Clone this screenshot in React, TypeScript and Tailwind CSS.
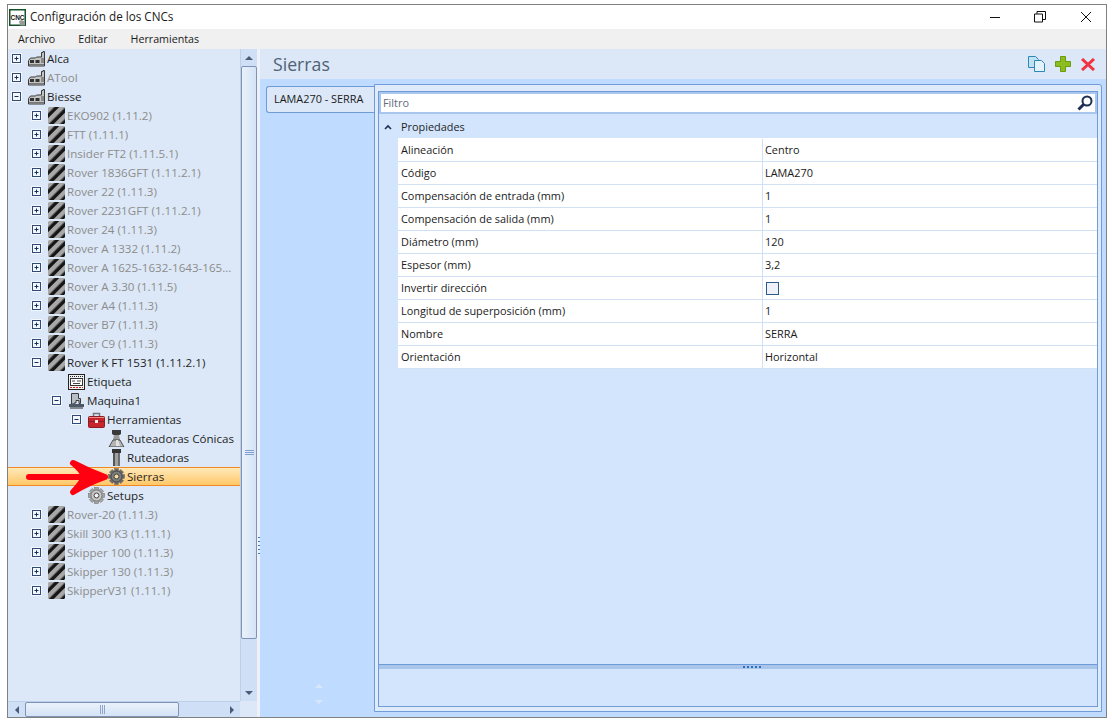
const font = "font-['Open_Sans','Noto_Sans',sans-serif]";

function Expander({ open }: { open: boolean }) {
  return (
    <svg width="11" height="11" viewBox="0 0 11 11" className="shrink-0">
      <rect x="0" y="0" width="11" height="11" fill="#f4f7fc" />
      <rect x="1.500" y="1.500" width="8" height="8" fill="#f4f7fc" stroke="#2e4a78" />
      <path d="M3.500 5.500h4" stroke="#16305c" />
      {!open && <path d="M5.500 3.500v4" stroke="#16305c" />}
    </svg>
  );
}

function Factory() {
  return (
    <svg width="17" height="16" viewBox="0 0 17 16">
      <path d="M0.500 15V9.500l2-2.500h5l1-1h5V1.500h1.500V0.500h1.500V15z" fill="#c4c4c4" stroke="#3a3a3a" />
      <path d="M2 9h4v3H2zM7.500 9h4v3h-4z" fill="#333" />
      <path d="M1 13.500h15" stroke="#777" />
      <path d="M13 7h3v5h-3z" fill="#8a8a8a" />
    </svg>
  );
}

function Hatch({ id }: { id: string }) {
  return (
    <svg width="17" height="17" viewBox="0 0 17 17">
      <defs>
        <pattern id={id} width="8" height="8" patternUnits="userSpaceOnUse" patternTransform="rotate(-45)">
          <rect width="8" height="8" fill="#161616" />
          <rect width="8" height="4.500" fill="#a8a8a8" />
        </pattern>
      </defs>
      <path d="M1 0h15l1 1v15l-1 1H1l-1-1V1z" fill={`url(#${id})`} />
    </svg>
  );
}

function Label() {
  return (
    <svg width="17" height="16" viewBox="0 0 17 16">
      <rect x="0.500" y="0.500" width="16" height="15" fill="#f2f2f2" stroke="#222" />
      <path d="M2 2.500h13" stroke="#222" strokeDasharray="1 1" />
      <rect x="2.500" y="4.500" width="12" height="7" fill="#fff" stroke="#333" />
      <path d="M4 7h3M9 7h4M5 9.500h7" stroke="#444" />
      <path d="M2 13.500h13" stroke="#d02020" strokeDasharray="2 1" />
    </svg>
  );
}

function Machine() {
  return (
    <svg width="17" height="16" viewBox="0 0 17 16">
      <path d="M3.500 0.500h7v5h2v5h-1.500V7.500H8V10H6v1H3.500z" fill="#b8bec6" stroke="#3c3c3c" />
      <path d="M1 11h15v3H1z" fill="#4d5866" />
      <path d="M2 15h13" stroke="#2a2a2a" />
    </svg>
  );
}

function Toolbox() {
  return (
    <svg width="17" height="16" viewBox="0 0 17 16">
      <path d="M5.500 5V1.500h6V5" fill="none" stroke="#777" strokeWidth="1.500" />
      <rect x="0.500" y="4.500" width="16" height="11" rx="1" fill="#c8242c" stroke="#8c1d22" />
      <path d="M1 5.500h15" stroke="#ef8a8a" />
      <path d="M1 9.500h15" stroke="#8c1d22" />
      <rect x="7" y="8" width="3" height="3" fill="#ececec" />
    </svg>
  );
}

function Conical() {
  return (
    <svg width="17" height="17" viewBox="0 0 17 17">
      <path d="M4 0h9v4l-1.500 1h-6L4 4z" fill="#3a3a3a" />
      <path d="M6 5h5l1 5H5z" fill="#9a9a9a" />
      <path d="M5 10h7l4 7H1z" fill="#b4b4b4" stroke="#333" strokeWidth="0.800" />
      <path d="M8 10h2l2 6H8z" fill="#e2e2e2" />
    </svg>
  );
}

function Router() {
  return (
    <svg width="17" height="17" viewBox="0 0 17 17">
      <rect x="4" y="0" width="9" height="4" fill="#333" />
      <rect x="5" y="4" width="7" height="13" fill="#a0a0a0" />
      <rect x="5" y="4" width="2" height="13" fill="#555" />
      <rect x="10" y="4" width="2" height="13" fill="#6e6e6e" />
    </svg>
  );
}

function Gear({ dark }: { dark?: boolean }) {
  const teeth = [0, 45, 90, 135, 180, 225, 270, 315];
  return (
    <svg width="17" height="17" viewBox="0 0 17 17">
      {teeth.map((a) => (
        <rect
          key={a}
          x="6.500"
          y="0.500"
          width="4"
          height="4"
          fill={dark ? "#6a6a6a" : "#a4a4a4"}
          stroke="#666"
          strokeWidth="0.500"
          transform={`rotate(${a} 8.500 8.500)`}
        />
      ))}
      <circle cx="8.500" cy="8.500" r="5.500" fill={dark ? "#7d7d7d" : "#c9c9c9"} stroke={dark ? "#444" : "#777"} />
      <circle cx="8.500" cy="8.500" r="2.500" fill={dark ? "#f0d9a0" : "#f1f1f1"} stroke="#444" />
    </svg>
  );
}

type Row = { label: string; level: number; icon: React.ReactNode; open?: boolean; leaf?: boolean; dim?: boolean; selected?: boolean };

const machines = [
  "EKO902 (1.11.2)",
  "FTT (1.11.1)",
  "Insider FT2 (1.11.5.1)",
  "Rover 1836GFT (1.11.2.1)",
  "Rover 22 (1.11.3)",
  "Rover 2231GFT (1.11.2.1)",
  "Rover 24 (1.11.3)",
  "Rover A 1332 (1.11.2)",
  "Rover A 1625-1632-1643-165...",
  "Rover A 3.30 (1.11.5)",
  "Rover A4 (1.11.3)",
  "Rover B7 (1.11.3)",
  "Rover C9 (1.11.3)",
];

const machinesAfter = ["Rover-20 (1.11.3)", "Skill 300 K3 (1.11.1)", "Skipper 100 (1.11.3)", "Skipper 130 (1.11.3)", "SkipperV31 (1.11.1)"];

const rows: Row[] = [
  { label: "Alca", level: 0, icon: <Factory /> },
  { label: "ATool", level: 0, icon: <Factory />, dim: true },
  { label: "Biesse", level: 0, icon: <Factory />, open: true },
  ...machines.map((m, i) => ({ label: m, level: 1, icon: <Hatch id={`h${i}`} />, dim: true })),
  { label: "Rover K FT 1531 (1.11.2.1)", level: 1, icon: <Hatch id="hk" />, open: true },
  { label: "Etiqueta", level: 2, icon: <Label />, leaf: true },
  { label: "Maquina1", level: 2, icon: <Machine />, open: true },
  { label: "Herramientas", level: 3, icon: <Toolbox />, open: true },
  { label: "Ruteadoras Cónicas", level: 4, icon: <Conical />, leaf: true },
  { label: "Ruteadoras", level: 4, icon: <Router />, leaf: true },
  { label: "Sierras", level: 4, icon: <Gear dark />, leaf: true, selected: true },
  { label: "Setups", level: 3, icon: <Gear />, leaf: true },
  ...machinesAfter.map((m, i) => ({ label: m, level: 1, icon: <Hatch id={`a${i}`} />, dim: true })),
];

const indents = ["pl-[3px]", "pl-[23px]", "pl-[43px]", "pl-[63px]", "pl-[83px]"];

function TreeRow({ row }: { row: Row }) {
  return (
    <div
      className={`flex h-[19px] items-center text-[11.6px] ${indents[row.level]} ${row.dim ? "text-[#8c8c8c]" : "text-[#1f1f1f]"} ${row.selected ? "border-y border-[#f08a24] bg-gradient-to-b from-[#ffe9b8] to-[#ffc765]" : ""}`}
    >
      <div className="w-[11px] shrink-0">{!row.leaf && <Expander open={!!row.open} />}</div>
      <div className="ml-[6px] flex w-[17px] shrink-0 items-center justify-center">{row.icon}</div>
      <span className="ml-[2px] whitespace-nowrap">{row.label}</span>
    </div>
  );
}

const props: [string, string][] = [
  ["Alineación", "Centro"],
  ["Código", "LAMA270"],
  ["Compensación de entrada (mm)", "1"],
  ["Compensación de salida (mm)", "1"],
  ["Diámetro (mm)", "120"],
  ["Espesor (mm)", "3,2"],
  ["Invertir dirección", ""],
  ["Longitud de superposición (mm)", "1"],
  ["Nombre", "SERRA"],
  ["Orientación", "Horizontal"],
];

export default function App() {
  return (
    <div className={`h-[728px] w-[1112px] bg-white pl-[7px] pt-[4px] ${font}`}>
      <div className="relative flex h-[714px] w-[1100px] flex-col border border-[#808080] bg-white">
        {/* title bar */}
        <div className="flex h-[24px] shrink-0 items-center pl-[1px]">
          <svg width="17" height="17" viewBox="0 0 17 17" className="shrink-0">
            <rect x="0.750" y="0.750" width="15.500" height="15.500" fill="#fff" stroke="#14532a" strokeWidth="1.500" />
            <path d="M10 12l3-1 3 2v3.500h-5z" fill="#9a9a9a" />
            <text x="8.500" y="11" textAnchor="middle" fontSize="6.500" fontWeight="700" fill="#111" fontFamily="Liberation Sans">
              CNC
            </text>
          </svg>
          <span className="ml-[4px] text-[11.7px] text-[#1a1a1a]">Configuración de los CNCs</span>
          <div className="ml-auto flex items-center pr-[14px]">
            <svg width="12" height="12" viewBox="0 0 12 12" className="mr-[33px]">
              <path d="M1 6.500h10" stroke="#111" />
            </svg>
            <svg width="12" height="12" viewBox="0 0 12 12" className="mr-[34px]">
              <path d="M0.500 3h8v8h-8zM3 3V0.500h8.500v8H9" fill="none" stroke="#111" />
            </svg>
            <svg width="12" height="12" viewBox="0 0 12 12">
              <path d="M1 1l10 10M11 1L1 11" stroke="#111" />
            </svg>
          </div>
        </div>
        {/* menu */}
        <div className="flex h-[20px] shrink-0 items-center gap-[23px] bg-[#f0f0f0] pl-[10px] text-[10.7px] text-[#1a1a1a]">
          <span>Archivo</span>
          <span>Editar</span>
          <span>Herramientas</span>
        </div>
        <div className="flex min-h-0 flex-1">
          {/* left: tree */}
          <div className="flex w-[249px] shrink-0 flex-col">
            <div className="flex min-h-0 flex-1">
              <div className="relative w-[232px] overflow-hidden bg-[#dce8f7]">
                {rows.map((r) => (
                  <TreeRow key={r.label} row={r} />
                ))}
                <svg width="86" height="40" viewBox="0 0 86 40" className="absolute left-[18px] top-[408px]">
                  <path d="M3 20H76" fill="none" stroke="#ff0010" strokeWidth="6" strokeLinecap="round" />
                  <path
                    d="M47 6Q62 14 79 20Q62 26 47 35Q56 26 58 20Q56 13 47 6z"
                    fill="#ff0010"
                    stroke="#ff0010"
                    strokeWidth="6"
                    strokeLinejoin="round"
                  />
                </svg>
              </div>
              <div className="flex w-[17px] flex-col border-l border-[#bcd0ea] bg-[#cfdff5]">
                <div className="flex h-[17px] shrink-0 items-center justify-center">
                  <div className="h-0 w-0 border-x-[4px] border-b-[4px] border-x-transparent border-b-[#4a5a78]" />
                </div>
                <div className="flex h-[573px] shrink-0 justify-center rounded-[2px] border border-[#7f93b5] bg-gradient-to-r from-[#eaf1fb] to-[#d5e3f6] pt-[383px]">
                  <div className="h-[5px] w-[9px] border-y border-[#7f9fcc] after:mt-[1px] after:block after:h-px after:bg-[#7f9fcc]" />
                </div>
                <div className="flex-1" />
                <div className="flex h-[17px] shrink-0 items-center justify-center">
                  <div className="h-0 w-0 border-x-[4px] border-t-[4px] border-x-transparent border-t-[#4a5a78]" />
                </div>
              </div>
            </div>
            <div className="flex h-[16px] shrink-0">
              <div className="flex w-[232px] items-center border-t border-[#bcd0ea] bg-[#cfdff5]">
                <div className="flex w-[17px] shrink-0 items-center justify-center">
                  <div className="h-0 w-0 border-y-[4px] border-r-[4px] border-y-transparent border-r-[#4a5a78]" />
                </div>
                <div className="flex h-full w-[154px] shrink-0 items-center justify-center rounded-[2px] border border-[#7f93b5] bg-gradient-to-b from-[#eaf1fb] to-[#d5e3f6]">
                  <div className="h-[9px] w-[5px] border-x border-[#8fa6c8] after:ml-[1px] after:block after:h-full after:w-px after:bg-[#8fa6c8]" />
                </div>
                <div className="flex-1" />
                <div className="flex w-[16px] shrink-0 items-center justify-center">
                  <div className="h-0 w-0 border-y-[4px] border-l-[4px] border-y-transparent border-l-[#4a5a78]" />
                </div>
              </div>
              <div className="w-[17px] bg-[#dce8f7]" />
            </div>
          </div>
          {/* splitter */}
          <div className="w-[3px] shrink-0 bg-[#eef2f8] pl-[1px] pt-[488px]">
            <div className="h-[18px] w-[2px] bg-[repeating-linear-gradient(to_bottom,#3f78c8_0,#3f78c8_1.500px,transparent_1.500px,transparent_4px)]" />
          </div>
          {/* right */}
          <div className="flex min-w-0 flex-1 flex-col bg-[#bfdbff]">
            <div className="flex h-[30px] shrink-0 items-center bg-[#dce8f7] pl-[13px] pr-[11px]">
              <span className="text-[17.700px] text-[#4f6275]">Sierras</span>
              <div className="ml-auto flex items-center gap-[10px]">
                <svg width="17" height="16" viewBox="0 0 17 16">
                  <path d="M0.500 0.500h7l3 3v8h-10z" fill="#bfe3f2" stroke="#2d87b8" />
                  <path d="M6.500 4.500h7l3 3v8h-10z" fill="#e4f3fa" stroke="#2d87b8" />
                </svg>
                <svg width="16" height="16" viewBox="0 0 16 16">
                  <path d="M5.500 0.500h5v5h5v5h-5v5h-5v-5h-5v-5h5z" fill="#8cbd1e" stroke="#6c9a10" />
                </svg>
                <svg width="14" height="13" viewBox="0 0 14 13">
                  <path d="M1 1l12 11M13 1L1 12" stroke="#f0333f" strokeWidth="3" />
                </svg>
              </div>
            </div>
            <div className="flex min-h-0 flex-1 pb-[5px] pl-[6px] pr-[4px] pt-[7px]">
              {/* tabs */}
              <div className="relative flex w-[108px] shrink-0 flex-col">
                <div className="flex h-[27px] items-center rounded-l-[3px] border border-r-0 border-[#6f9bd8] bg-[#dce8f7] pl-[7px] text-[10.900px] text-[#1a1a1a]">
                  LAMA270 - SERRA
                </div>
                <div className="absolute bottom-[8px] left-[49px] flex flex-col gap-[12px]">
                  <div className="h-0 w-0 border-x-[4px] border-b-[4px] border-x-transparent border-b-[#d8e6fa]" />
                  <div className="h-0 w-0 border-x-[4px] border-t-[4px] border-x-transparent border-t-[#d8e6fa]" />
                </div>
              </div>
              {/* tab content */}
              <div className="-mt-[2px] min-w-0 flex-1 rounded-tr-[3px] border border-[#6f9bd8] bg-[#dfeafa] pb-[4px] pl-[3px] pr-[3px] pt-[6px]">
                <div className="flex h-full flex-col border border-[#6f9bd8] bg-[#d2e5fc]">
                  <div className="flex h-[22px] shrink-0 items-center border-2 border-[#a8c6ee] bg-white px-[2px] text-[10.900px] text-[#5f6b7a]">
                    <span>Filtro</span>
                    <svg width="16" height="16" viewBox="0 0 16 16" className="ml-auto">
                      <circle cx="10" cy="6" r="4.500" fill="#fff" stroke="#1c2f52" strokeWidth="2" />
                      <path d="M6.500 9.500L1.500 14.500" stroke="#1c2f52" strokeWidth="3" />
                    </svg>
                  </div>
                  <div className="mt-[2px] flex h-[22px] shrink-0 items-center text-[10.900px] text-[#1f1f1f]">
                    <svg width="8" height="6" viewBox="0 0 8 6" className="ml-[5px]">
                      <path d="M1 5l3-3 3 3" fill="none" stroke="#1c2f52" strokeWidth="1.600" />
                    </svg>
                    <span className="ml-[9px]">Propiedades</span>
                  </div>
                  <div className="ml-[19px] shrink-0 border-t border-white">
                    {props.map(([k, v]) => (
                      <div key={k} className="flex h-[23px] items-center border-b border-[#d2e0f3] bg-white text-[10.900px] text-[#1a1a1a]">
                        <div className="flex h-full w-[365px] shrink-0 items-center border-r border-[#cfe0f7] pl-[3px]">{k}</div>
                        <div className="pl-[2px]">
                          {k === "Invertir dirección" ? <div className="ml-[1px] h-[13px] w-[13px] border border-[#2d5a8c] bg-[#eef2f8]" /> : v}
                        </div>
                      </div>
                    ))}
                  </div>
                  <div className="flex-1" />
                  <div className="flex h-[5px] shrink-0 justify-center border-t border-[#6f9bd8] bg-[#a9c5ea] pl-[28px]">
                    <div className="mt-[1px] h-[2px] w-[18px] bg-[repeating-linear-gradient(to_right,#2d6fc0_0,#2d6fc0_2px,transparent_2px,transparent_4px)]" />
                  </div>
                  <div className="h-[37px] shrink-0" />
                </div>
              </div>
            </div>
          </div>
        </div>
      </div>
    </div>
  );
}
